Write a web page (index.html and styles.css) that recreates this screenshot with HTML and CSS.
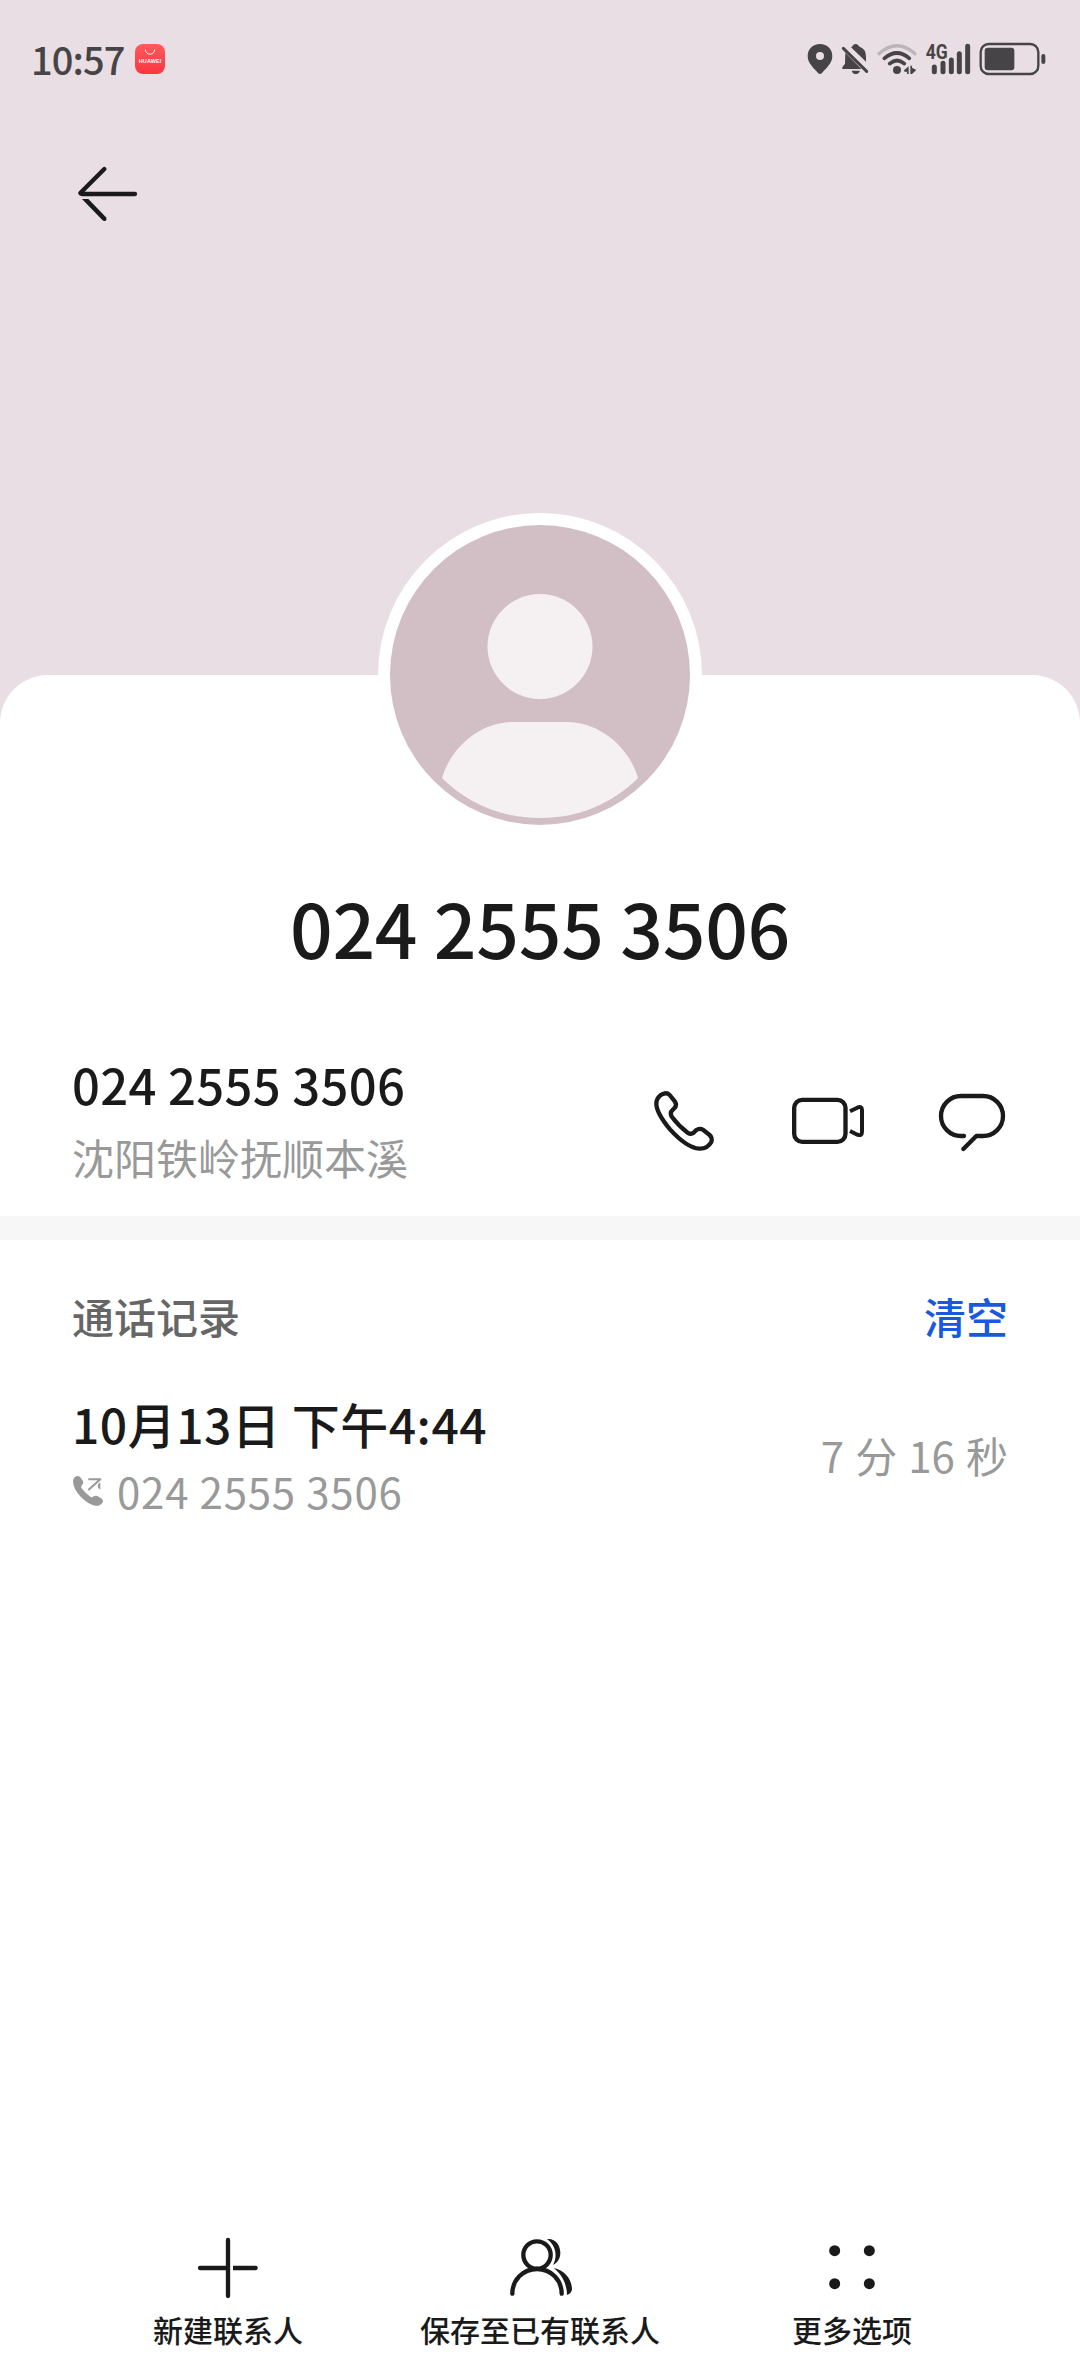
FILE: index.html
```
<!DOCTYPE html>
<html lang="zh-CN">

<head>
    <meta charset="UTF-8">
    <meta name="viewport" content="width=device-width, initial-scale=1.0">
    <title>联系人详情</title>
    <link rel="stylesheet" href="styles.css">
</head>

<body>
    <header class="status-bar">
        <span class="clock">10:57</span>
        <svg class="app-badge" width="30" height="30" viewBox="0 0 30 30">
            <defs>
                <linearGradient id="badgeFill" x1="0" y1="0" x2="0" y2="1">
                    <stop offset="0" stop-color="#ff5a5c" />
                    <stop offset="1" stop-color="#fc3440" />
                </linearGradient>
            </defs>
            <rect width="30" height="30" rx="8" fill="url(#badgeFill)" />
            <path d="M10.3 5.5a4.7 4.7 0 0 0 9.4 0" fill="none" stroke="#fff" stroke-width="0.9" />
            <text x="15" y="19" text-anchor="middle" textLength="22.5" class="badge-text">HUAWEI</text>
        </svg>
        <div class="status-icons">
            <!-- location -->
            <svg width="26" height="38" viewBox="81 60 78 114">
                <path fill-rule="evenodd" d="M120 72C98 72 83 88 83 108C83 130 103 146 114 159Q120 165 126 159C137 146 157 130 157 108C157 88 142 72 120 72ZM120 96A12 12 0 1 1 120 120A12 12 0 1 1 120 96Z" />
            </svg>
            <!-- muted bell -->
            <svg width="27" height="38" viewBox="183 60 81 114">
                <path d="M213 82Q217 80 219 76Q227 68 235 76Q237 80 242 82Q258 89 258 110V125Z" />
                <path d="M196 98L244 147H189Q184 146 188 140L195 131Z" />
                <path d="M215 152H240Q236 162 227 162Q218 162 215 152Z" />
                <path class="line" d="M190 85L260 154" stroke-width="9" />
            </svg>
            <!-- wifi -->
            <svg width="40" height="38" viewBox="288 60 120 114">
                <path class="line faint" d="M297 101Q351 53 405 101" stroke-width="10" />
                <path class="line" d="M313 115Q351 83 388 115M329 131Q351 112 373 131" stroke-width="11" />
                <circle cx="351" cy="150" r="12" />
                <path d="M372 151L386 139V162H381V155H373ZM391 137H396V143L409 150L396 162H391Z" />
            </svg>
            <!-- mobile signal -->
            <svg width="47" height="38" viewBox="432 60 141 114">
                <text x="437" y="117" textLength="66" lengthAdjust="spacingAndGlyphs" class="net-text">4G</text>
                <path class="line" d="M463 141V155M489 130V155M514 120V155M538 101V155M563 79V155" stroke-width="15" />
            </svg>
            <!-- battery -->
            <svg width="68" height="38" viewBox="597 60 204 114">
                <rect class="line" x="602" y="72" width="173" height="90" rx="24" stroke-width="7" />
                <rect x="614" y="83" width="89" height="68" rx="9" />
                <rect x="784" y="102" width="12" height="30" rx="6" />
            </svg>
        </div>
    </header>

    <nav class="nav-bar">
        <svg width="72" height="72" viewBox="216 414 216 216">
            <path class="line" d="M313 447L241 519Q242 522 246 522H405" stroke-width="13" />
            <path d="M246 537H265L318 592Q322 599 317 602Q312 605 307 600Z" />
        </svg>
    </nav>

    <main class="sheet">
        <svg class="avatar" width="324" height="324" viewBox="0 0 324 324">
            <circle cx="162" cy="162" r="162" fill="#fff" />
            <circle cx="162" cy="162" r="150" fill="#d1bfc5" />
            <circle cx="162" cy="133.5" r="52.5" fill="#f5f1f3" />
            <path d="M64 265C74 232 104 209 135 209H189C220 209 250 232 260 265C234 291 200 305 162 305C124 305 90 291 64 265Z" fill="#f5f1f3" />
        </svg>

        <h1 class="title">024 2555 3506</h1>

        <section class="phone-row">
            <div class="phone-info">
                <div class="phone-number">024 2555 3506</div>
                <div class="phone-place">沈阳铁岭抚顺本溪</div>
            </div>
            <div class="phone-actions">
                <svg width="72" height="72" viewBox="84 72 216 216">
                    <path class="line" stroke-width="13" d="M109 128Q109 113 121 103Q138 91 149 102L165 122Q172 133 163 142L155 150Q149 157 156 168Q177 196 203 215Q213 222 221 215L228 208Q239 200 250 207L268 221Q278 230 274 243Q262 264 238 263Q200 260 150 205Q109 155 109 128Z" />
                </svg>
                <svg width="72" height="72" viewBox="516 72 216 216">
                    <rect class="line" x="522.5" y="116.5" width="154" height="126" rx="24" stroke-width="13" />
                    <path class="line butt" stroke-width="12" d="M690 151L712 140Q726 134 726 148V212Q726 226 712 221L690 210" />
                </svg>
                <svg width="72" height="72" viewBox="948 72 216 216">
                    <path class="line" stroke-width="13" d="M1032 225H1023A60 60 0 0 1 1023 105H1089A60 60 0 0 1 1089 225H1069L1030 264" />
                </svg>
            </div>
        </section>

        <div class="divider"></div>

        <section class="call-log">
            <div class="log-header">
                <h2>通话记录</h2>
                <a class="clear-link" href="#">清空</a>
            </div>
            <div class="log-item">
                <div>
                    <div class="log-date">10月13日 下午4:44</div>
                    <div class="log-number">
                        <!-- outgoing call -->
                        <svg width="32" height="32" viewBox="102 615 96 96">
                            <path d="M105 633Q107 619 118 618Q124 617 128 623L135 633Q138 639 133 644L130 648Q128 651 132 656Q145 672 157 680Q162 684 165 680Q173 674 182 680L191 686Q198 691 193 698Q186 709 172 707Q152 704 128 680Q105 656 105 633Z" />
                            <path class="line butt" d="M151 628H187L151 660" stroke-width="6" />
                            <path d="M180 643L187 637V659L180 653Z" />
                        </svg>
                        <span>024 2555 3506</span>
                    </div>
                </div>
                <div class="log-duration">7 分 16 秒</div>
            </div>
        </section>

        <footer class="toolbar">
            <div class="tool">
                <svg width="72" height="72" viewBox="186 66 216 216">
                    <path class="line" d="M294 90V258M210 174H290" stroke-width="13" />
                    <path d="M309 167.500H377A6.500 6.500 0 0 1 377 180.500H309Z" />
                </svg>
                <span>新建联系人</span>
            </div>
            <div class="tool">
                <svg width="72" height="72" viewBox="312 66 216 216">
                    <circle class="line" cx="411" cy="135" r="41" stroke-width="13" />
                    <path class="line" d="M337 251C337 211 368 177 411 177S485 211 485 251" stroke-width="13" />
                    <path d="M441 87C466 84 481 105 481 129C481 145 473 158 459 165C472 140 470 108 441 87ZM461 174C492 179 516 207 516 238Q515 250 501 255C501 224 487 194 461 174Z" />
                </svg>
                <span>保存至已有联系人</span>
            </div>
            <div class="tool">
                <svg width="72" height="72" viewBox="168 66 216 216">
                    <circle cx="224" cy="122" r="16.500" />
                    <circle cx="328" cy="122" r="16.500" />
                    <circle cx="224" cy="221" r="16.500" />
                    <circle cx="328" cy="221" r="16.500" />
                </svg>
                <span>更多选项</span>
            </div>
        </footer>
    </main>
</body>

</html>
```
FILE: styles.css
```
* {
    box-sizing: border-box;
}

body {
    font-family: "Noto Sans CJK SC", sans-serif;
    display: flex;
    flex-direction: column;
    height: 2376px;
    margin: 0;
    background-color: #e9dee4;
    color: #1a1a1a;
}

svg {
    display: block;
    flex: none;
    fill: currentColor;
    overflow: visible;
}

.line {
    fill: none;
    stroke: currentColor;
    stroke-linecap: round;
    stroke-linejoin: round;
}

.butt {
    stroke-linecap: butt;
}

.faint {
    opacity: 0.27;
}

.status-bar {
    display: flex;
    align-items: center;
    height: 118px;
    padding: 0 33px 0 31px;
    color: #464446;
}

.clock {
    width: 104px;
    font-size: 38px;
    font-weight: 500;
    letter-spacing: -0.9px;
    line-height: 56px;
}

.badge-text {
    fill: #fff;
    font-family: "Liberation Sans", sans-serif;
    font-size: 5.5px;
    font-weight: bold;
}

.status-icons {
    display: flex;
    gap: 8px;
    margin-left: auto;
}

.net-text {
    font-family: Roboto, sans-serif;
    font-size: 60px;
    font-weight: bold;
}

.nav-bar {
    height: 557px;
    padding: 40px 72px;
}

.sheet {
    display: flex;
    flex-direction: column;
    flex: 1;
    background-color: #fff;
    border-radius: 48px 48px 0 0;
}

.avatar {
    margin: -162px auto 0;
}

.title {
    margin: 45px 0 0;
    font-size: 75px;
    font-weight: 500;
    line-height: 90px;
    letter-spacing: -0.3px;
    text-align: center;
}

.phone-row {
    display: flex;
    justify-content: space-between;
    align-items: center;
    padding: 82px 72px 29px;
}

.phone-number {
    margin-bottom: 13px;
    font-size: 49px;
    font-weight: 500;
    line-height: 60px;
    letter-spacing: 0.3px;
}

.phone-place {
    color: #999;
    font-size: 42px;
    line-height: 60px;
}

.phone-actions {
    display: flex;
    gap: 72px;
}

.divider {
    height: 24px;
    background-color: #f7f7f7;
}

.call-log {
    padding: 46px 72px 0;
}

.log-header {
    display: flex;
    justify-content: space-between;
    font-size: 42px;
    line-height: 60px;
}

.log-header h2 {
    margin: 0;
    color: #666;
    font-size: 42px;
    font-weight: 500;
}

.clear-link {
    color: #1859de;
    font-weight: 500;
    text-decoration: none;
}

.log-item {
    display: flex;
    justify-content: space-between;
    align-items: center;
    margin-top: 47px;
}

.log-date {
    margin-bottom: 13px;
    font-size: 48px;
    font-weight: 500;
    line-height: 60px;
    letter-spacing: 0.5px;
}

.log-number {
    display: flex;
    align-items: center;
    gap: 13px;
    color: #999;
    font-size: 42px;
    line-height: 50px;
    letter-spacing: 0.8px;
}

.log-duration {
    color: #999;
    font-size: 42px;
    line-height: 60px;
    word-spacing: 1.7px;
}

.toolbar {
    display: flex;
    margin-top: auto;
    padding: 0 72px 27px;
}

.tool {
    display: flex;
    flex-direction: column;
    align-items: center;
    flex: 1;
    gap: 5px;
    font-size: 30px;
    font-weight: 500;
    line-height: 40px;
}
```
